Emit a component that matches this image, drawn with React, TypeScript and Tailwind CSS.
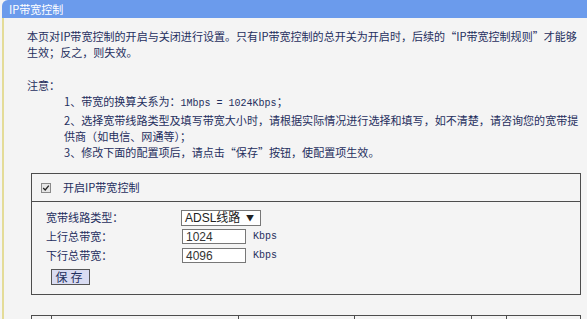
import React from 'react';

const mono = "font-['Liberation_Mono',monospace]";

export default function App() {
  return (
    <div className="w-[587px] h-[319px] overflow-hidden bg-[#f4f4f4] font-['Noto_Sans_CJK_SC',sans-serif] text-[11.05px] text-[#1f2f5e]">
      <div className="ml-[2px] h-[18px] rounded-tl-[6px] bg-[#6b9bec] pl-[7px] leading-[18px] text-white">IP带宽控制</div>

      <div className="ml-[2px] w-[585px] border-l-2 border-[#e4dc98] pl-[23px] pr-[6px] pt-[10px] pb-[40px]">
        <div className="leading-[16px] whitespace-nowrap">
          <p>本页对IP带宽控制的开启与关闭进行设置。只有IP带宽控制的总开关为开启时，后续的“IP带宽控制规则”才能够</p>
          <p>生效；反之，则失效。</p>
          <p className="mt-[17px]">注意：</p>
          <div className="pl-[37px]">
            <p>1、带宽的换算关系为：<span className={`${mono} text-[10px]`}>1Mbps = 1024Kbps</span>；</p>
            <p>2、选择宽带线路类型及填写带宽大小时，请根据实际情况进行选择和填写，如不清楚，请咨询您的宽带提</p>
            <p>供商（如电信、网通等）；</p>
            <p>3、修改下面的配置项后，请点击“保存”按钮，使配置项生效。</p>
          </div>
        </div>

        <div className="ml-[4px] mt-[13px] w-[550px] border border-[#4d4d4d]">
          <div className="flex h-[28px] items-center gap-[12px] border-b border-[#4d4d4d] pl-[9px]">
            <span className="flex h-[10px] w-[10px] items-center justify-center border border-[#8a8a8a] bg-[#e6e6e6]">
              <svg viewBox="0 0 10 10" className="h-[8px] w-[8px]">
                <path d="M1.5 5 L4 7.5 L8.5 2" fill="none" stroke="#222" strokeWidth="1.6" />
              </svg>
            </span>
            <span>开启IP带宽控制</span>
          </div>

          <div className="pl-[14px] pt-[6px] pb-[9px]">
            <div className="flex h-[19px] items-center">
              <span className="w-[135px]">宽带线路类型：</span>
              <div className="flex h-[16px] w-[80px] items-center justify-between border border-[#777] bg-white pl-[3px] pr-[6px] text-[12px] text-[#222]">
                <span className="font-['Liberation_Sans','Noto_Sans_CJK_SC',sans-serif]">ADSL线路</span>
                <span className="text-[8px]">▼</span>
              </div>
            </div>
            <div className="flex h-[19px] items-center">
              <span className="w-[136px]">上行总带宽：</span>
              <div className="flex h-[15px] w-[64px] items-center border border-[#777] bg-white pl-[3px] font-['Liberation_Sans',sans-serif] text-[12px] text-[#333]">1024</div>
              <span className={`${mono} ml-[7px] text-[10px]`}>Kbps</span>
            </div>
            <div className="flex h-[19px] items-center">
              <span className="w-[136px]">下行总带宽：</span>
              <div className="flex h-[15px] w-[64px] items-center border border-[#777] bg-white pl-[3px] font-['Liberation_Sans',sans-serif] text-[12px] text-[#333]">4096</div>
              <span className={`${mono} ml-[7px] text-[10px]`}>Kbps</span>
            </div>
            <button className="ml-[5px] mt-[4px] flex h-[16px] w-[39px] items-center justify-center border border-[#555] bg-[#d9dcf2] text-[12px] leading-none tracking-[3px] text-[#1f2f5e]">
              保存
            </button>
          </div>
        </div>

        <div className="ml-[4px] mt-[20px] grid h-[24px] w-[550px] grid-cols-[19px_187px_116px_117px_35px_1fr] border border-[#4d4d4d]">
          <div />
          <div className="border-l border-[#4d4d4d]" />
          <div className="border-l border-[#4d4d4d] pt-[2px] text-center">上行带宽(Kbps)</div>
          <div className="border-l border-[#4d4d4d] pt-[2px] text-center">下行带宽(Kbps)</div>
          <div className="border-l border-[#4d4d4d]" />
          <div className="border-l border-[#4d4d4d]" />
        </div>
      </div>
    </div>
  );
}
